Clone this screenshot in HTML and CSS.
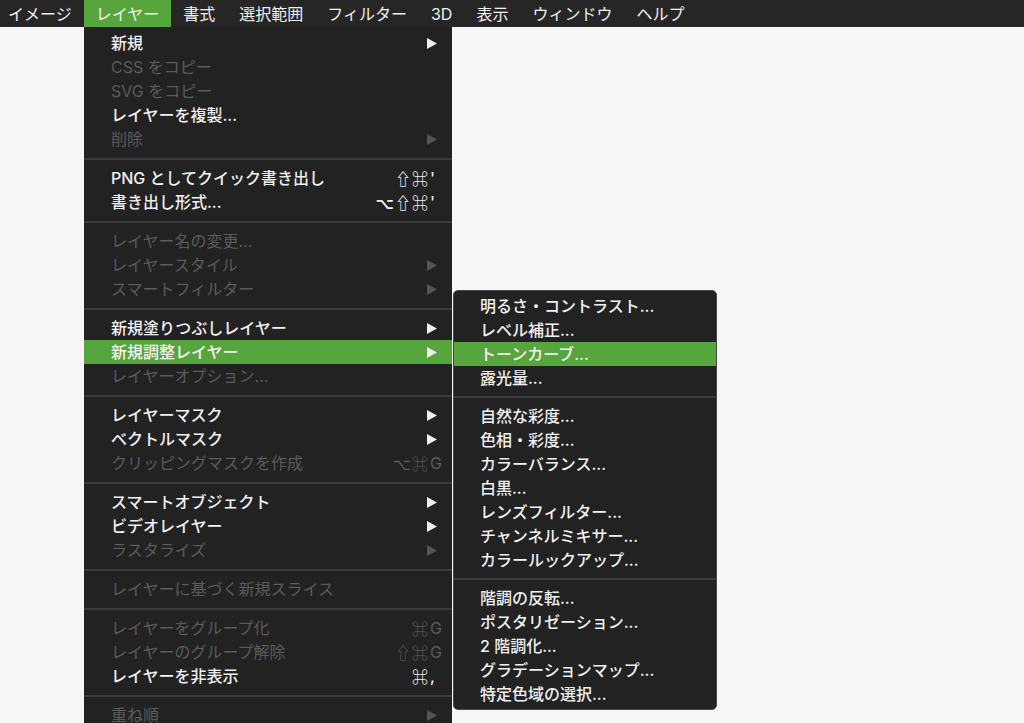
FILE: index.html
```html
<!DOCTYPE html>
<html lang="ja">
<head>
<meta charset="utf-8">
<title>レイヤー メニュー</title>
<link rel="stylesheet" href="styles.css">
</head>
<body>
<div class="menubar">
  <div class="mi first">イメージ</div>
  <div class="mi active">レイヤー</div>
  <div class="mi">書式</div>
  <div class="mi">選択範囲</div>
  <div class="mi">フィルター</div>
  <div class="mi">3D</div>
  <div class="mi">表示</div>
  <div class="mi">ウィンドウ</div>
  <div class="mi">ヘルプ</div>
</div>

<div class="menu">
  <div class="row"><span class="label">新規</span><svg class="arr" viewBox="0 0 10 11"><polygon points="0,0 10,5.5 0,11"/></svg></div>
  <div class="row dis"><span class="label">CSS をコピー</span></div>
  <div class="row dis"><span class="label">SVG をコピー</span></div>
  <div class="row"><span class="label">レイヤーを複製...</span></div>
  <div class="row dis"><span class="label">削除</span><svg class="arr" viewBox="0 0 10 11"><polygon points="0,0 10,5.5 0,11"/></svg></div>
  <div class="sep"></div>
  <div class="row sc"><span class="label">PNG としてクイック書き出し</span><span class="keys"><span class="mods">⇧⌘</span><span class="key">'</span></span></div>
  <div class="row sc"><span class="label">書き出し形式...</span><span class="keys"><span class="mods">⌥⇧⌘</span><span class="key">'</span></span></div>
  <div class="sep"></div>
  <div class="row dis"><span class="label">レイヤー名の変更...</span></div>
  <div class="row dis"><span class="label">レイヤースタイル</span><svg class="arr" viewBox="0 0 10 11"><polygon points="0,0 10,5.5 0,11"/></svg></div>
  <div class="row dis"><span class="label">スマートフィルター</span><svg class="arr" viewBox="0 0 10 11"><polygon points="0,0 10,5.5 0,11"/></svg></div>
  <div class="sep"></div>
  <div class="row"><span class="label">新規塗りつぶしレイヤー</span><svg class="arr" viewBox="0 0 10 11"><polygon points="0,0 10,5.5 0,11"/></svg></div>
  <div class="row hl"><span class="label">新規調整レイヤー</span><svg class="arr" viewBox="0 0 10 11"><polygon points="0,0 10,5.5 0,11"/></svg></div>
  <div class="row dis"><span class="label">レイヤーオプション...</span></div>
  <div class="sep"></div>
  <div class="row"><span class="label">レイヤーマスク</span><svg class="arr" viewBox="0 0 10 11"><polygon points="0,0 10,5.5 0,11"/></svg></div>
  <div class="row"><span class="label">ベクトルマスク</span><svg class="arr" viewBox="0 0 10 11"><polygon points="0,0 10,5.5 0,11"/></svg></div>
  <div class="row dis sc"><span class="label">クリッピングマスクを作成</span><span class="keys"><span class="mods">⌥⌘</span><span class="key">G</span></span></div>
  <div class="sep"></div>
  <div class="row"><span class="label">スマートオブジェクト</span><svg class="arr" viewBox="0 0 10 11"><polygon points="0,0 10,5.5 0,11"/></svg></div>
  <div class="row"><span class="label">ビデオレイヤー</span><svg class="arr" viewBox="0 0 10 11"><polygon points="0,0 10,5.5 0,11"/></svg></div>
  <div class="row dis"><span class="label">ラスタライズ</span><svg class="arr" viewBox="0 0 10 11"><polygon points="0,0 10,5.5 0,11"/></svg></div>
  <div class="sep"></div>
  <div class="row dis"><span class="label">レイヤーに基づく新規スライス</span></div>
  <div class="sep"></div>
  <div class="row dis sc"><span class="label">レイヤーをグループ化</span><span class="keys"><span class="mods">⌘</span><span class="key">G</span></span></div>
  <div class="row dis sc"><span class="label">レイヤーのグループ解除</span><span class="keys"><span class="mods">⇧⌘</span><span class="key">G</span></span></div>
  <div class="row sc"><span class="label">レイヤーを非表示</span><span class="keys"><span class="mods">⌘</span><span class="key">,</span></span></div>
  <div class="sep"></div>
  <div class="row dis"><span class="label">重ね順</span><svg class="arr" viewBox="0 0 10 11"><polygon points="0,0 10,5.5 0,11"/></svg></div>
</div>

<div class="submenu">
  <div class="row"><span class="label">明るさ・コントラスト...</span></div>
  <div class="row"><span class="label">レベル補正...</span></div>
  <div class="row hl"><span class="label">トーンカーブ...</span></div>
  <div class="row"><span class="label">露光量...</span></div>
  <div class="sep"></div>
  <div class="row"><span class="label">自然な彩度...</span></div>
  <div class="row"><span class="label">色相・彩度...</span></div>
  <div class="row"><span class="label">カラーバランス...</span></div>
  <div class="row"><span class="label">白黒...</span></div>
  <div class="row"><span class="label">レンズフィルター...</span></div>
  <div class="row"><span class="label">チャンネルミキサー...</span></div>
  <div class="row"><span class="label">カラールックアップ...</span></div>
  <div class="sep"></div>
  <div class="row"><span class="label">階調の反転...</span></div>
  <div class="row"><span class="label">ポスタリゼーション...</span></div>
  <div class="row"><span class="label">2 階調化...</span></div>
  <div class="row"><span class="label">グラデーションマップ...</span></div>
  <div class="row"><span class="label">特定色域の選択...</span></div>
</div>
</body>
</html>
```

FILE: styles.css
```css
* { box-sizing: border-box; }

html, body {
  margin: 0;
  padding: 0;
}

body {
  width: 1024px;
  height: 723px;
  overflow: hidden;
  position: relative;
  background: #f7f6f7;
  font-family: Inter, "Noto Sans CJK JP", "DejaVu Sans", sans-serif;
  font-size: 16px;
  font-weight: 500;
  color: #f0f0f0;
}

.menubar {
  display: flex;
  height: 27px;
  background: #262626;
  line-height: 28px;
  font-weight: 400;
  white-space: nowrap;
}

.mi {
  padding: 0 12px;
}

.mi.first {
  padding-left: 8px;
}

.mi.active {
  background: #57a53d;
}

.menu {
  position: absolute;
  left: 84px;
  top: 27px;
  width: 368px;
  height: 700px;
  padding-top: 4px;
  background: #222222;
}

.row {
  display: flex;
  align-items: center;
  height: 24px;
  padding: 0 15px 0 27px;
  white-space: nowrap;
  line-height: 24px;
}

.row.sc {
  padding-right: 11px;
}

.label {
  flex: 1;
}

.row.dis {
  color: #5b5b5b;
  font-weight: 400;
}

.row.hl {
  background: #57a53d;
  color: #f4f4f4;
}

.arr {
  width: 10px;
  height: 11px;
  fill: #efefef;
}

.row.dis .arr {
  fill: #545454;
}

.keys {
  display: flex;
  align-items: center;
}

.mods {
  font-family: "Noto Sans CJK JP", "DejaVu Sans", sans-serif;
  font-size: 16px;
  font-weight: 700;
  letter-spacing: 1px;
  text-align: right;
}

.row.dis .mods {
  font-weight: 400;
}

.key {
  width: 12px;
  padding-left: 1px;
  font-family: Inter, sans-serif;
}

.sep {
  height: 15px;
  display: flex;
  align-items: center;
}

.sep::before {
  content: "";
  display: block;
  width: 100%;
  height: 2px;
  background: #3b3b3b;
}

.submenu {
  position: absolute;
  left: 453px;
  top: 290px;
  width: 264px;
  padding: 3px 0;
  background: #222222;
  border: 1px solid #474747;
  border-radius: 5px;
  overflow: hidden;
}

.submenu .row {
  padding-left: 26px;
}

.submenu .sep {
  height: 14px;
}
```
